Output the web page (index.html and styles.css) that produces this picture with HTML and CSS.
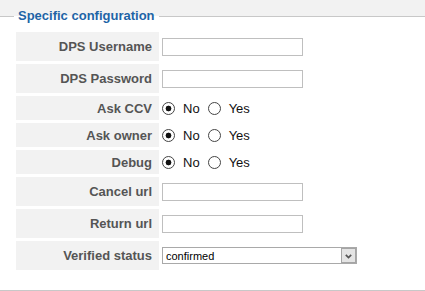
FILE: index.html
```html
<!DOCTYPE html>
<html lang="en">
<head>
    <meta charset="UTF-8">
    <title>Specific configuration</title>
    <link rel="stylesheet" href="styles.css">
</head>
<body>
    <fieldset class="config">
        <legend>Specific configuration</legend>
        <table class="form-table">
            <tr class="row-input">
                <th>DPS Username</th>
                <td><input type="text" class="text-input"></td>
            </tr>
            <tr class="row-input">
                <th>DPS Password</th>
                <td><input type="password" class="text-input"></td>
            </tr>
            <tr class="row-radio">
                <th>Ask CCV</th>
                <td>
                    <div class="radio-group">
                        <label class="radio"><input type="radio" name="ccv" checked>No</label>
                        <label class="radio"><input type="radio" name="ccv">Yes</label>
                    </div>
                </td>
            </tr>
            <tr class="row-radio">
                <th>Ask owner</th>
                <td>
                    <div class="radio-group">
                        <label class="radio"><input type="radio" name="owner" checked>No</label>
                        <label class="radio"><input type="radio" name="owner">Yes</label>
                    </div>
                </td>
            </tr>
            <tr class="row-radio">
                <th>Debug</th>
                <td>
                    <div class="radio-group">
                        <label class="radio"><input type="radio" name="debug" checked>No</label>
                        <label class="radio"><input type="radio" name="debug">Yes</label>
                    </div>
                </td>
            </tr>
            <tr class="row-input">
                <th>Cancel url</th>
                <td><input type="text" class="text-input"></td>
            </tr>
            <tr class="row-input">
                <th>Return url</th>
                <td><input type="text" class="text-input"></td>
            </tr>
            <tr class="row-input">
                <th>Verified status</th>
                <td>
                    <span class="select-wrap">
                        <select class="select">
                            <option>confirmed</option>
                            <option>unconfirmed</option>
                        </select>
                        <span class="select-btn">
                            <svg width="7" height="5" viewBox="0 0 7 5"><polyline points="0.8,0.8 3.5,3.6 6.2,0.8" fill="none" stroke="#555" stroke-width="1.7"/></svg>
                        </span>
                    </span>
                </td>
            </tr>
        </table>
    </fieldset>
</body>
</html>
```

FILE: styles.css
```css
html, body {
    background-color: #f2f2f2;
}

body {
    margin: 0;
    font-family: 'Liberation Sans', Arial, sans-serif;
    font-size: 13px;
}

.config {
    margin: 8px 0 0;
    padding: 5px 0 17px 13px;
    border: 0;
    border-top: 1px solid #c8c8c8;
    border-bottom: 1px solid #c8c8c8;
    background-color: #fff;
    min-width: 0;
}

.config legend {
    margin-left: 1px;
    padding: 0 4px;
    color: #1e64a6;
    font-weight: bold;
    font-size: 13px;
    line-height: 16px;
}

.form-table {
    border-collapse: separate;
    border-spacing: 3px;
}

.form-table th {
    width: 136px;
    padding: 0 7px 0 0;
    background-color: #f2f2f2;
    color: #555;
    font-weight: bold;
    text-align: right;
    white-space: nowrap;
}

.form-table td {
    padding: 0;
}

.row-input th,
.row-input td {
    height: 29px;
}

.row-radio th,
.row-radio td {
    height: 24px;
}

.text-input {
    box-sizing: border-box;
    width: 141px;
    height: 18px;
    margin: 0;
    padding: 0 2px;
    border: 1px solid #bfbfbf;
    vertical-align: middle;
    font-family: 'Liberation Sans', Arial, sans-serif;
    font-size: 12px;
}

.radio-group {
    display: flex;
    align-items: center;
    gap: 8px;
}

.radio {
    display: inline-flex;
    align-items: center;
    gap: 8px;
    color: #111;
}

.radio input {
    appearance: none;
    box-sizing: border-box;
    width: 13px;
    height: 13px;
    margin: 0;
    border: 1px solid #444;
    border-radius: 50%;
    background: #fff;
}

.radio input:checked {
    background: radial-gradient(circle, #111 0 2.6px, #fff 3.2px);
}

.select-wrap {
    position: relative;
    display: inline-block;
    vertical-align: middle;
}

.select {
    appearance: none;
    display: block;
    box-sizing: border-box;
    width: 195px;
    height: 17px;
    margin: 0;
    padding: 0 0 0 3px;
    border: 1px solid #a9a9a9;
    border-radius: 0;
    background: #fff;
    color: #000;
    font-family: 'Liberation Sans', Arial, sans-serif;
    font-size: 11px;
}

.select-btn {
    position: absolute;
    top: 1px;
    right: 1px;
    box-sizing: border-box;
    width: 15px;
    height: 15px;
    border: 1px solid #a5a5a5;
    background: #e4e4e4;
    display: flex;
    align-items: center;
    justify-content: center;
    padding-top: 2px;
    pointer-events: none;
}

.select-btn svg {
    display: block;
}
```
